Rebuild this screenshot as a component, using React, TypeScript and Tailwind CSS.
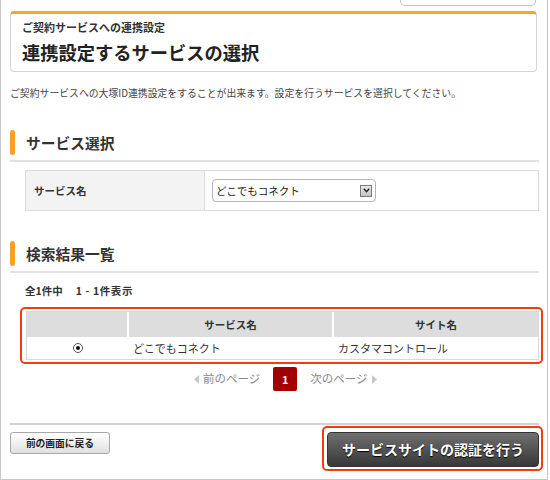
import React from "react";

function SectionHeading({ title }: { title: string }) {
  return (
    <>
      <div className="flex items-center h-[25px]">
        <div className="w-[5px] h-[25px] rounded-[3px] bg-[#f7a12b]" />
        <div className="ml-[11px] text-[14.75px] font-bold text-[#333] leading-[25px]">
          {title}
        </div>
      </div>
      <div className="mt-[5px] h-[2px] bg-[#e2e2e2]" />
    </>
  );
}

function Triangle({ dir }: { dir: "left" | "right" }) {
  return (
    <svg width="5" height="9" viewBox="0 0 5 9" className="shrink-0">
      {dir === "left" ? (
        <polygon points="5,0 5,9 0,4.5" fill="#c8c8c8" />
      ) : (
        <polygon points="0,0 0,9 5,4.5" fill="#c8c8c8" />
      )}
    </svg>
  );
}

export default function App() {
  return (
    <div className="w-[550px] h-[480px] bg-white text-[#333] font-['Noto_Sans_CJK_JP','Noto_Sans',sans-serif]">
      <div className="w-[548px] h-[480px] border-l border-r border-b border-[#c6c6c6] pl-[9px] pr-[8px]">
        {/* cut-off button at the top */}
        <div className="flex justify-end h-[6px]">
          <div className="w-[136px] h-[6px] mr-[3px] border border-t-0 border-[#c2c2c2] rounded-b-[5px]" />
        </div>

        {/* page title */}
        <div className="mt-[5px] mr-[2px] h-[61px] border border-[#d4d4d4] border-t-[3px] border-t-[#f5a631] rounded-[4px] pl-[11px] pt-[6px]">
          <div className="text-[11px] font-bold leading-[15px] text-[#333]">
            ご契約サービスへの連携設定
          </div>
          <div className="mt-[4px] text-[18.25px] font-bold leading-[26px] text-[#222]">
            連携設定するサービスの選択
          </div>
        </div>

        <div className="mt-[13px] text-[9.85px] leading-[16px] text-[#444] whitespace-nowrap">
          ご契約サービスへの大塚ID連携設定をすることが出来ます。設定を行うサービスを選択してください。
        </div>

        {/* service select */}
        <div className="mt-[29px]">
          <SectionHeading title="サービス選択" />
        </div>
        <div className="mt-[8px] ml-[15px] h-[41px] flex border border-[#dcdcdc]">
          <div className="w-[179px] bg-[#f3f3f3] border-r border-[#dcdcdc] flex items-center pl-[8px]">
            <span className="text-[10.5px] font-bold text-[#333]">サービス名</span>
          </div>
          <div className="flex-1 flex items-center pl-[7px]">
            <div className="w-[164px] h-[23px] border border-[#b5b5b5] rounded-[4px] bg-white flex items-center justify-between pl-[3px] pr-[3px]">
              <span className="text-[10.5px] text-[#222]">どこでもコネクト</span>
              <div className="w-[12px] h-[12px] border border-[#7a7a7a] bg-gradient-to-b from-[#e8e8e8] to-[#c4c4c4] flex items-center justify-center">
                <svg width="7" height="5" viewBox="0 0 7 5">
                  <polyline points="0.8,0.8 3.5,3.8 6.2,0.8" fill="none" stroke="#222" strokeWidth="1.4" />
                </svg>
              </div>
            </div>
          </div>
        </div>

        {/* results */}
        <div className="mt-[30px]">
          <SectionHeading title="検索結果一覧" />
        </div>
        <div className="mt-[10px] ml-[15px] text-[10.5px] font-bold leading-[16px] text-[#333] whitespace-pre flex">
          <span>全1件中</span>
          <span className="ml-[13px] tracking-[0.6px]">1 - 1件表示</span>
        </div>

        <div className="mt-[8px] ml-[10px] mr-[-4px] border-2 border-[#f23c14] rounded-[5px] pl-[4px] pr-[2px] pt-[2px] pb-[2px]">
          <div className="border border-[#d8d8d8]">
            <div className="flex h-[25px] bg-[#dddddd] text-[10.5px] font-bold text-[#333]">
              <div className="w-[102px] border-r-2 border-white" />
              <div className="w-[205px] border-r-2 border-white flex items-center justify-center">
                サービス名
              </div>
              <div className="flex-1 flex items-center justify-center">サイト名</div>
            </div>
            <div className="flex h-[22px] bg-white text-[11px] text-[#333]">
              <div className="w-[102px] flex items-center justify-center">
                <div className="w-[10px] h-[10px] rounded-full border border-[#555] bg-white flex items-center justify-center">
                  <div className="w-[4px] h-[4px] rounded-full bg-[#111]" />
                </div>
              </div>
              <div className="w-[205px] flex items-center pl-[4px]">どこでもコネクト</div>
              <div className="flex-1 flex items-center pl-[4px]">カスタマコントロール</div>
            </div>
          </div>
        </div>

        {/* pagination */}
        <div className="mt-[3px] pl-[184px] flex items-center h-[24px]">
          <div className="flex items-center gap-[4px] text-[11.5px] text-[#888]">
            <Triangle dir="left" />
            <span>前のページ</span>
          </div>
          <div className="ml-[13px] w-[24px] h-[24px] rounded-[2px] bg-[#a30000] flex items-center justify-center text-white text-[11px] font-bold">
            1
          </div>
          <div className="ml-[13px] flex items-center gap-[4px] text-[11.5px] text-[#888]">
            <span>次のページ</span>
            <Triangle dir="right" />
          </div>
        </div>

        <div className="mt-[32px] h-[2px] bg-[#d2d2d2]" />

        {/* buttons */}
        <div className="flex justify-between items-start">
          <button className="mt-[7px] w-[100px] h-[22px] border border-[#a8a8a8] rounded-[3px] bg-gradient-to-b from-white to-[#e0e0e0] text-[9.75px] font-bold text-[#222] flex items-center justify-center">
            前の画面に戻る
          </button>
          <div className="mt-[1px] mr-[-4px] border-2 border-[#f23c14] rounded-[5px] pl-[3px] pr-[2px] pt-[4px] pb-[2px]">
            <button className="w-[212px] h-[35px] rounded-[4px] border border-[#333] bg-gradient-to-b from-[#707070] to-[#383838] text-white text-[14px] font-bold flex items-center justify-center [text-shadow:0_1px_1px_#000]">
              サービスサイトの認証を行う
            </button>
          </div>
        </div>
      </div>
    </div>
  );
}
